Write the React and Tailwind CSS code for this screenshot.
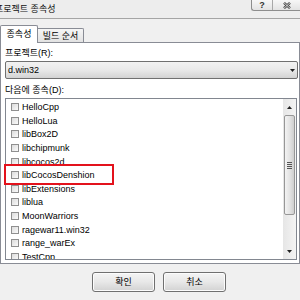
import React from "react";

const items = [
  "HelloCpp",
  "HelloLua",
  "libBox2D",
  "libchipmunk",
  "libcocos2d",
  "libCocosDenshion",
  "libExtensions",
  "liblua",
  "MoonWarriors",
  "ragewar11.win32",
  "range_warEx",
  "TestCpp",
];

const CheckRow = ({ label }) => (
  <div className="h-[13.6px] flex items-center shrink-0">
    <span className="ml-[5px] w-[8px] h-[8px] border border-[#8f8f8f] bg-gradient-to-br from-[#dcdcdc] to-[#fbfbfb] shrink-0" />
    <span className="ml-[3px] text-black whitespace-nowrap">{label}</span>
  </div>
);

const Arrow = ({ up }) => (
  <svg width="5" height="3" viewBox="0 0 5 3">
    <path d={up ? "M0 3 L2.5 0 L5 3 Z" : "M0 0 L5 0 L2.5 3 Z"} fill="#222" />
  </svg>
);

const App = () => {
  return (
    <div className="relative w-[300px] h-[300px] overflow-hidden bg-[#f0f0f0] font-['Liberation_Sans','Noto_Sans_CJK_KR',sans-serif] text-[9px] leading-[12px] text-black">
      {/* title bar */}
      <div className="h-[19px] flex justify-between items-start border-b border-[#a5a5a5] bg-[#ededed]">
        <span className="mt-[3px] -ml-[5px] whitespace-nowrap text-[#111]">프로젝트 종속성</span>
        <div className="flex h-[11px] border-l border-b border-[#8d8d8d] rounded-bl-[3px] bg-gradient-to-b from-[#f7f7f7] to-[#e3e3e3]">
          <div className="w-[21px] flex items-center justify-center border-r border-[#a8a8a8]">
            <span className="text-[9px] leading-none font-bold text-[#333]">?</span>
          </div>
          <div className="w-[27px] flex items-center justify-center">
            <svg width="8" height="7" viewBox="0 0 8 7">
              <path d="M1 0.8 L7 6.2 M7 0.8 L1 6.2" stroke="#444" strokeWidth="2.4" />
              <path d="M1 0.8 L7 6.2 M7 0.8 L1 6.2" stroke="#f5f5f5" strokeWidth="0.8" />
            </svg>
          </div>
        </div>
      </div>

      {/* tabs */}
      <div className="h-[23px] flex items-end">
        <div className="relative z-10 -mb-px w-[38px] h-[18px] bg-white border border-b-0 border-[#898c95] rounded-t-[2px] flex justify-center pt-[2px]">
          <span className="whitespace-nowrap">종속성</span>
        </div>
        <div className="w-[46px] h-[14px] bg-gradient-to-b from-[#f6f6f6] to-[#e2e2e2] border border-b-0 border-l-0 border-[#898c95] rounded-tr-[2px] flex justify-center pt-[1px]">
          <span className="whitespace-nowrap">빌드 순서</span>
        </div>
      </div>

      {/* tab page */}
      <div className="h-[222px] bg-white border border-[#898c95] pl-[4px] pt-[4px] flex flex-col">
        <span className="whitespace-nowrap">프로젝트(R):</span>
        <div className="mt-[2px] w-[293px] h-[18px] border border-[#707070] rounded-[2px] bg-gradient-to-b from-[#f2f2f2] via-[#e9e9e9] to-[#d3d3d3] flex items-center justify-between pl-[2px] pr-[2px]">
          <span>d.win32</span>
          <Arrow />
        </div>
        <span className="mt-[5px] whitespace-nowrap">다음에 종속(D):</span>
        <div className="mt-[2px] w-[292px] h-[162px] border border-[#828790] flex overflow-hidden">
          <div className="flex-1 flex flex-col pt-[1.5px] overflow-hidden">
            {items.map((it) => (
              <CheckRow key={it} label={it} />
            ))}
          </div>
          <div className="w-[13px] flex flex-col bg-gradient-to-r from-[#e6e6e6] to-[#f4f4f4]">
            <div className="h-[16px] flex items-center justify-center">
              <Arrow up />
            </div>
            <div className="h-[100px] mx-[1px] border border-[#979797] rounded-[2px] bg-gradient-to-r from-[#f3f3f3] via-[#e4e4e4] to-[#cfcfcf] flex flex-col items-center justify-center gap-[1px]">
              <span className="w-[5px] h-px bg-[#555]" />
              <span className="w-[5px] h-px bg-[#555]" />
              <span className="w-[5px] h-px bg-[#555]" />
              <span className="w-[5px] h-px bg-[#555]" />
            </div>
            <div className="flex-1" />
            <div className="h-[16px] flex items-center justify-center">
              <Arrow />
            </div>
          </div>
        </div>
      </div>

      {/* buttons */}
      <div className="flex pl-[92px] pt-[8px] gap-[8px]">
        <button className="w-[63px] h-[20px] border border-[#707070] rounded-[3px] bg-gradient-to-b from-[#f4f4f4] via-[#e8e8e8] to-[#d2d2d2] shadow-[inset_0_0_0_1px_#fcfcfc] text-[9px] leading-none">
          확인
        </button>
        <button className="w-[63px] h-[20px] border border-[#707070] rounded-[3px] bg-gradient-to-b from-[#f4f4f4] via-[#e8e8e8] to-[#d2d2d2] shadow-[inset_0_0_0_1px_#fcfcfc] text-[9px] leading-none">
          취소
        </button>
      </div>

      {/* red highlight annotation */}
      <div className="absolute left-[4px] top-[164px] w-[110px] h-[21px] border-2 border-[#e3121c]" />
    </div>
  );
};

export default App;
